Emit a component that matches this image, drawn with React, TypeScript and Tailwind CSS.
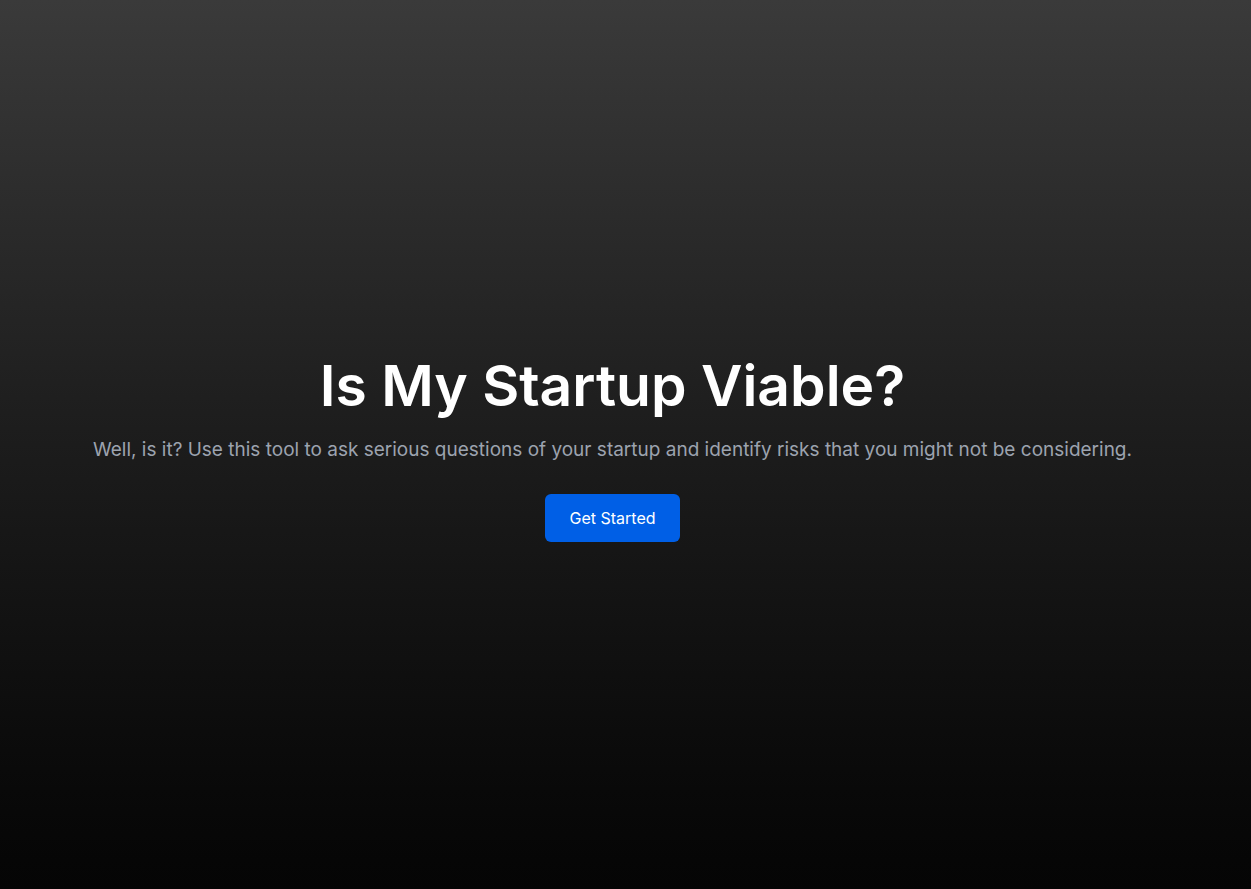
export default function App() {
  return (
    <div className="min-h-screen w-full bg-gradient-to-b from-[#3a3a3a] via-[#1c1c1c] to-[#050505] flex flex-col items-center justify-center pt-[10px] pr-[26px] font-['Inter',sans-serif] text-center">
      <h1 className="text-[57px] font-semibold text-white leading-none">Is My Startup Viable?</h1>
      <p className="mt-[22px] text-[19px] text-[#9ca3af]">
        Well, is it? Use this tool to ask serious questions of your startup and identify risks that you might not be considering.
      </p>
      <button className="mt-[30px] px-6 py-3 rounded-md bg-[#005fe6] text-white text-base">Get Started</button>
    </div>
  );
}
